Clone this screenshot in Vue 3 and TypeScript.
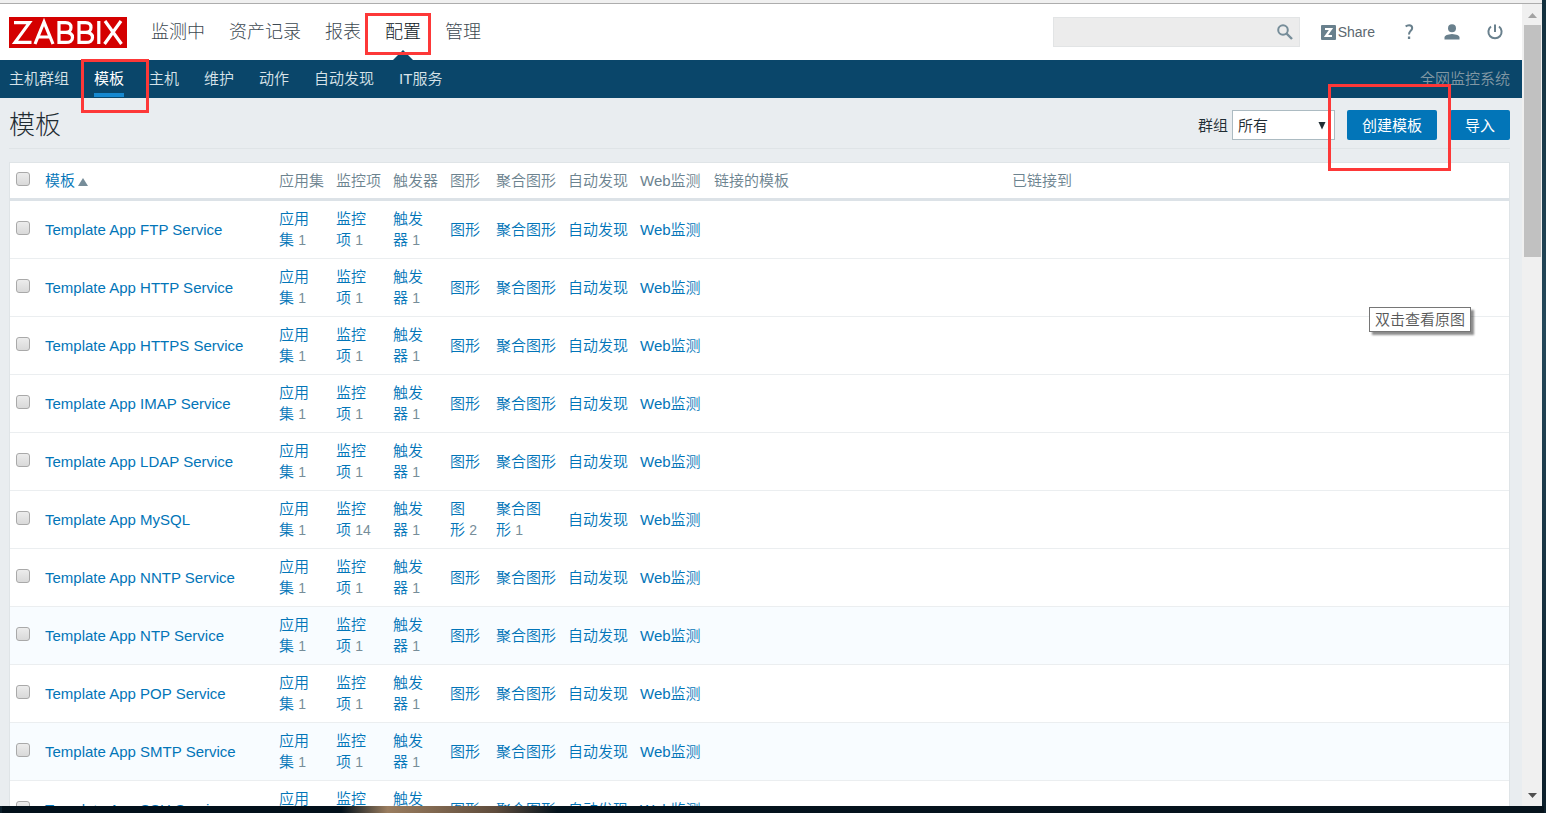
<script setup lang="ts">
import { ref } from 'vue'

interface Counts {
  apps?: number
  items?: number
  triggers?: number
  graphs?: number
  screens?: number
}

interface Template extends Counts {
  name: string
  hovered?: boolean
}

interface Column {
  key: keyof Counts | null
  label: string
  width: string
}

const mainMenu = ['监测中', '资产记录', '报表', '配置', '管理']
const activeMain = '配置'
const subMenu = ['主机群组', '模板', '主机', '维护', '动作', '自动发现', 'IT服务']
const activeSub = '模板'

const columns: Column[] = [
  { key: 'apps', label: '应用集', width: 'w-narrow' },
  { key: 'items', label: '监控项', width: 'w-narrow' },
  { key: 'triggers', label: '触发器', width: 'w-narrow' },
  { key: 'graphs', label: '图形', width: 'w-graph' },
  { key: 'screens', label: '聚合图形', width: 'w-wide' },
  { key: null, label: '自动发现', width: 'w-wide' },
  { key: null, label: 'Web监测', width: 'w-web' },
]

const base: Counts = { apps: 1, items: 1, triggers: 1 }
const templates: Template[] = [
  { name: 'Template App FTP Service', ...base },
  { name: 'Template App HTTP Service', ...base },
  { name: 'Template App HTTPS Service', ...base },
  { name: 'Template App IMAP Service', ...base },
  { name: 'Template App LDAP Service', ...base },
  { name: 'Template App MySQL', apps: 1, items: 14, triggers: 1, graphs: 2, screens: 1 },
  { name: 'Template App NNTP Service', ...base },
  { name: 'Template App NTP Service', ...base, hovered: true },
  { name: 'Template App POP Service', ...base },
  { name: 'Template App SMTP Service', ...base, hovered: true },
  { name: 'Template App SSH Service', ...base },
]

const group = ref('all')
const query = ref('')

function countOf(t: Template, c: Column): number | undefined {
  return c.key ? t[c.key] : undefined
}
</script>

<template>
  <div class="desktop">
    <div class="window">
      <div class="chrome-edge"></div>
      <div class="viewport">
        <div class="page">
          <header class="top">
            <a class="logo" href="#" aria-label="ZABBIX">
              <svg viewBox="0 0 118 31" width="118" height="31" aria-hidden="true">
                <rect width="118" height="31" fill="#d40000" />
                <g fill="none" stroke="#fff" stroke-width="3.200">
                  <path d="M5 5.600H20.500L6 25.400H22.500" />
                  <path d="M26 27L35 5L44 27M29 20H41" />
                  <path d="M50 5.600H56.500Q62 5.600 62 10.500T56.500 15.300H50M56.500 15.300Q63.500 15.300 63.500 20.400T56.500 25.400H50V4" />
                  <path d="M70 5.600H76.500Q82 5.600 82 10.500T76.500 15.300H70M76.500 15.300Q83.500 15.300 83.500 20.400T76.500 25.400H70V4" />
                  <path d="M89.800 4V27M96 4L112.500 27M112 4L95.500 27" />
                </g>
              </svg>
            </a>
            <nav class="main-nav">
              <a v-for="m in mainMenu" :key="m" href="#" :class="{ active: m === activeMain }">{{ m }}<span v-if="m === activeMain" class="mark mark-main"></span></a>
            </nav>
            <div class="tools">
              <form class="search" @submit.prevent>
                <input v-model="query" type="text" aria-label="搜索" />
                <button type="submit" aria-label="搜索">
                  <svg viewBox="0 0 16 16" width="16" height="16"><circle cx="6" cy="6" r="4.800" fill="none" stroke="#768d99" stroke-width="2" /><path d="M9.500 9.500L15 15" stroke="#768d99" stroke-width="2.400" /></svg>
                </button>
              </form>
              <a class="share" href="#">
                <svg viewBox="0 0 15 15" width="15" height="15" aria-hidden="true"><rect width="15" height="15" rx="1" fill="#69808d" /><path d="M4 4H10L5 11H11" fill="none" stroke="#fff" stroke-width="2.200" /></svg>
                <span>Share</span>
              </a>
              <a class="icon" href="#" aria-label="帮助">
                <svg viewBox="0 0 16 16" width="16" height="16"><path d="M4.700 2.500Q6 1.200 8.100 1.200Q11.200 1.200 11.200 4Q11.200 5.500 9.500 7Q8 8.400 8 10.500" fill="none" stroke="#69808d" stroke-width="2" /><rect x="6.900" y="12.500" width="2.300" height="2.500" fill="#69808d" /></svg>
              </a>
              <a class="icon" href="#" aria-label="用户">
                <svg viewBox="0 0 16 16" width="16" height="16"><circle cx="8" cy="4.200" r="4" fill="#69808d" /><path d="M0.500 15.500V13Q1 10.500 8 10Q15 10.500 15.500 13V15.500Z" fill="#69808d" /></svg>
              </a>
              <a class="icon" href="#" aria-label="退出">
                <svg viewBox="0 0 16 16" width="16" height="16"><path d="M8 0.500V8M4 2.500A6.600 6.600 0 1 0 12 2.500" fill="none" stroke="#69808d" stroke-width="2" /></svg>
              </a>
            </div>
          </header>

          <nav class="sub-nav">
            <a v-for="s in subMenu" :key="s" href="#" :class="{ active: s === activeSub }">{{ s }}<span v-if="s === activeSub" class="mark mark-sub"></span></a>
            <span class="server">全网监控系统</span>
          </nav>

          <main>
            <div class="title-row">
              <h1>模板</h1>
              <form class="controls" @submit.prevent>
                <label for="group">群组</label>
                <div class="select">
                  <select id="group" v-model="group">
                    <option value="all">所有</option>
                  </select>
                  <svg viewBox="0 0 8 8" width="8" height="8" aria-hidden="true"><path d="M0.500 0H7.500L4 7.500Z" fill="#1f2c33" /></svg>
                </div>
                <span class="create">
                  <button type="button">创建模板</button>
                  <span class="mark mark-create"></span>
                </span>
                <button type="button">导入</button>
              </form>
            </div>

            <table>
              <colgroup>
                <col class="w-check" />
                <col class="w-name" />
                <col v-for="c in columns" :key="c.label" :class="c.width" />
                <col class="w-linked" />
                <col />
              </colgroup>
              <thead>
                <tr>
                  <th><input type="checkbox" aria-label="全选" /></th>
                  <th>
                    <a href="#">模板<svg class="sort" viewBox="0 0 10 8" width="10" height="8" aria-hidden="true"><path d="M0 8L5 0L10 8Z" fill="#768d99" /></svg></a>
                  </th>
                  <th v-for="c in columns" :key="c.label">{{ c.label }}</th>
                  <th>链接的模板</th>
                  <th>已链接到</th>
                </tr>
              </thead>
              <tbody>
                <tr v-for="t in templates" :key="t.name" :class="{ hovered: t.hovered }">
                  <td><input type="checkbox" :aria-label="t.name" /></td>
                  <td><a href="#">{{ t.name }}</a></td>
                  <td v-for="c in columns" :key="c.label"><a href="#">{{ c.label }}</a><template v-if="countOf(t, c)">&nbsp;<span class="count">{{ countOf(t, c) }}</span></template></td>
                  <td></td>
                  <td></td>
                </tr>
              </tbody>
            </table>
          </main>
        </div>
        <div class="scrollbar" aria-hidden="true">
          <svg viewBox="0 0 20 21" width="20" height="21"><path d="M6 14H15L10.500 9Z" fill="#a3a3a3" /></svg>
          <div class="thumb"></div>
          <svg class="down" viewBox="0 0 20 20" width="20" height="20"><path d="M6 7H15L10.500 12Z" fill="#505050" /></svg>
        </div>
      </div>
      <div class="tooltip" role="tooltip">双击查看原图</div>
    </div>
  </div>
</template>

<style>
html,
body,
#app {
  height: 100%;
  margin: 0;
}
</style>

<style scoped>
* {
  box-sizing: border-box;
}
.desktop {
  height: 100%;
  padding: 0 4px 7px 0;
  overflow: hidden;
  background:
    linear-gradient(90deg, #02101a 0, #02101a 22%, #9a7d5f 25%, #5f4c3c 32%, #03121c 36%, #06131c 100%) bottom / calc(100% - 4px) 7px no-repeat,
    linear-gradient(#13303e, #24485a 40%, #0c1f2b);
  font: 350 15px/21px "Liberation Sans", Arial, "Noto Sans CJK SC", sans-serif;
  color: #1f2c33;
}
.window {
  position: relative;
  display: flex;
  flex-direction: column;
  height: 100%;
}
.chrome-edge {
  flex: none;
  height: 4px;
  background: #f0f0f0;
  border-bottom: 1px solid #adadad;
}
.viewport {
  display: flex;
  flex: 1;
  min-height: 0;
}
.page {
  flex: 1;
  min-width: 0;
  overflow: hidden;
  background: #e9edf0;
}
a {
  color: #0275b8;
  text-decoration: none;
}
.top {
  display: flex;
  align-items: center;
  height: 56px;
  padding: 0 19px 0 9px;
  background: #fff;
}
.logo svg {
  display: block;
}
.main-nav {
  display: flex;
  gap: 24px;
  height: 100%;
  margin-left: 24px;
  font-size: 18px;
  font-weight: 300;
  line-height: 56px;
}
.main-nav a {
  position: relative;
  color: #3c4851;
}
.main-nav .active {
  color: #0c161c;
}
.main-nav .active::after {
  content: "";
  position: absolute;
  bottom: 0;
  left: 50%;
  margin-left: -10px;
  border: 10px solid transparent;
  border-top: 0;
  border-bottom-color: #0a466a;
}
.tools {
  display: flex;
  align-items: center;
  margin-left: auto;
}
.search {
  display: flex;
  align-items: center;
  width: 247px;
  height: 30px;
  margin-right: 21px;
  background: #ececec;
  border: 1px solid #e2e4e5;
}
.search input {
  flex: 1;
  min-width: 0;
  height: 100%;
  padding: 0 6px;
  font: inherit;
  background: none;
  border: 0;
}
.search button {
  display: flex;
  padding: 0 6px;
  background: none;
  border: 0;
}
.share {
  display: flex;
  align-items: center;
  gap: 2px;
  margin-right: 26px;
  color: #5c6770;
  font-size: 14px;
}
.icon {
  display: flex;
}
.icon + .icon {
  margin-left: 27px;
}
.sub-nav {
  display: flex;
  gap: 25px;
  height: 38px;
  padding: 0 12px 0 9px;
  background: #0a466a;
  line-height: 37px;
}
.sub-nav a {
  position: relative;
  color: #d8e3e9;
}
.sub-nav .active {
  color: #fff;
  font-weight: 400;
}
.sub-nav .active::after {
  content: "";
  position: absolute;
  right: 0;
  bottom: 1px;
  left: 0;
  height: 4px;
  background: #1688cf;
}
.sub-nav .server {
  margin-left: auto;
  color: #8198a4;
}
main {
  padding: 0 12px 0 9px;
}
.title-row {
  display: flex;
  align-items: center;
  justify-content: space-between;
  height: 51px;
  margin-bottom: 13px;
  padding-top: 4px;
  border-bottom: 1px solid #dfe4e7;
}
h1 {
  margin: 0;
  font-size: 26px;
  font-weight: 300;
  line-height: 46px;
}
.controls {
  display: flex;
  align-items: center;
}
.select {
  position: relative;
  width: 103px;
  margin: 0 12px 0 4px;
}
select {
  display: block;
  width: 100%;
  height: 30px;
  padding: 0 5px;
  font: inherit;
  color: inherit;
  background: #fff;
  border: 1px solid #acbbc2;
  border-radius: 0;
  appearance: none;
}
.select svg {
  position: absolute;
  top: 12px;
  right: 9px;
  pointer-events: none;
}
.create {
  position: relative;
  margin-right: 13px;
}
.controls button {
  display: block;
  height: 30px;
  padding: 0 15px;
  font: inherit;
  font-weight: 400;
  color: #fff;
  background: #0275b8;
  border: 0;
  border-radius: 2px;
}
table {
  width: 100%;
  table-layout: fixed;
  border: 1px solid #dfe4e7;
  border-spacing: 0;
  background: #fff;
}
.w-check { width: 29px; }
.w-name { width: 234px; }
.w-narrow { width: 57px; }
.w-graph { width: 46px; }
.w-wide { width: 72px; }
.w-web { width: 74px; }
.w-linked { width: 298px; }
th {
  height: 38px;
  padding: 0 6px;
  border-bottom: 3px solid #dce2e7;
  color: #6c838f;
  font-weight: 350;
  text-align: left;
  white-space: nowrap;
}
td {
  height: 58px;
  padding: 7px 6px;
  border-bottom: 1px solid #ebeef0;
  vertical-align: middle;
}
.hovered td {
  background: #f8fcff;
}
.sort {
  margin-left: 3px;
}
.count {
  color: #768d99;
  font-size: 14px;
}
input[type="checkbox"] {
  display: block;
  width: 14px;
  height: 14px;
  margin: 0 0 3px;
  appearance: none;
  background: linear-gradient(#ececec, #d9d9d9);
  border: 1px solid #a9a9a9;
  border-radius: 3px;
}
.scrollbar {
  display: flex;
  flex-direction: column;
  flex: none;
  width: 20px;
  background: #f0f0f0;
}
.thumb {
  height: 232px;
  margin: 0 1px 0 2px;
  background: #c1c1c1;
}
.down {
  margin-top: auto;
}
.mark {
  position: absolute;
  z-index: 2;
  border: 3px solid #fd3838;
  pointer-events: none;
}
.mark-main {
  inset: 9px -10px 5px -20px;
}
.mark-sub {
  inset: -1px -25px -15px -13px;
}
.mark-create {
  inset: -26px -14px -31px -19px;
}
.tooltip {
  position: absolute;
  top: 307px;
  right: 71px;
  padding: 1px 5px;
  color: #575757;
  background: #fff;
  border: 1px solid #767676;
  box-shadow: 3px 3px 2px rgba(0, 0, 0, 0.45);
}
</style>
